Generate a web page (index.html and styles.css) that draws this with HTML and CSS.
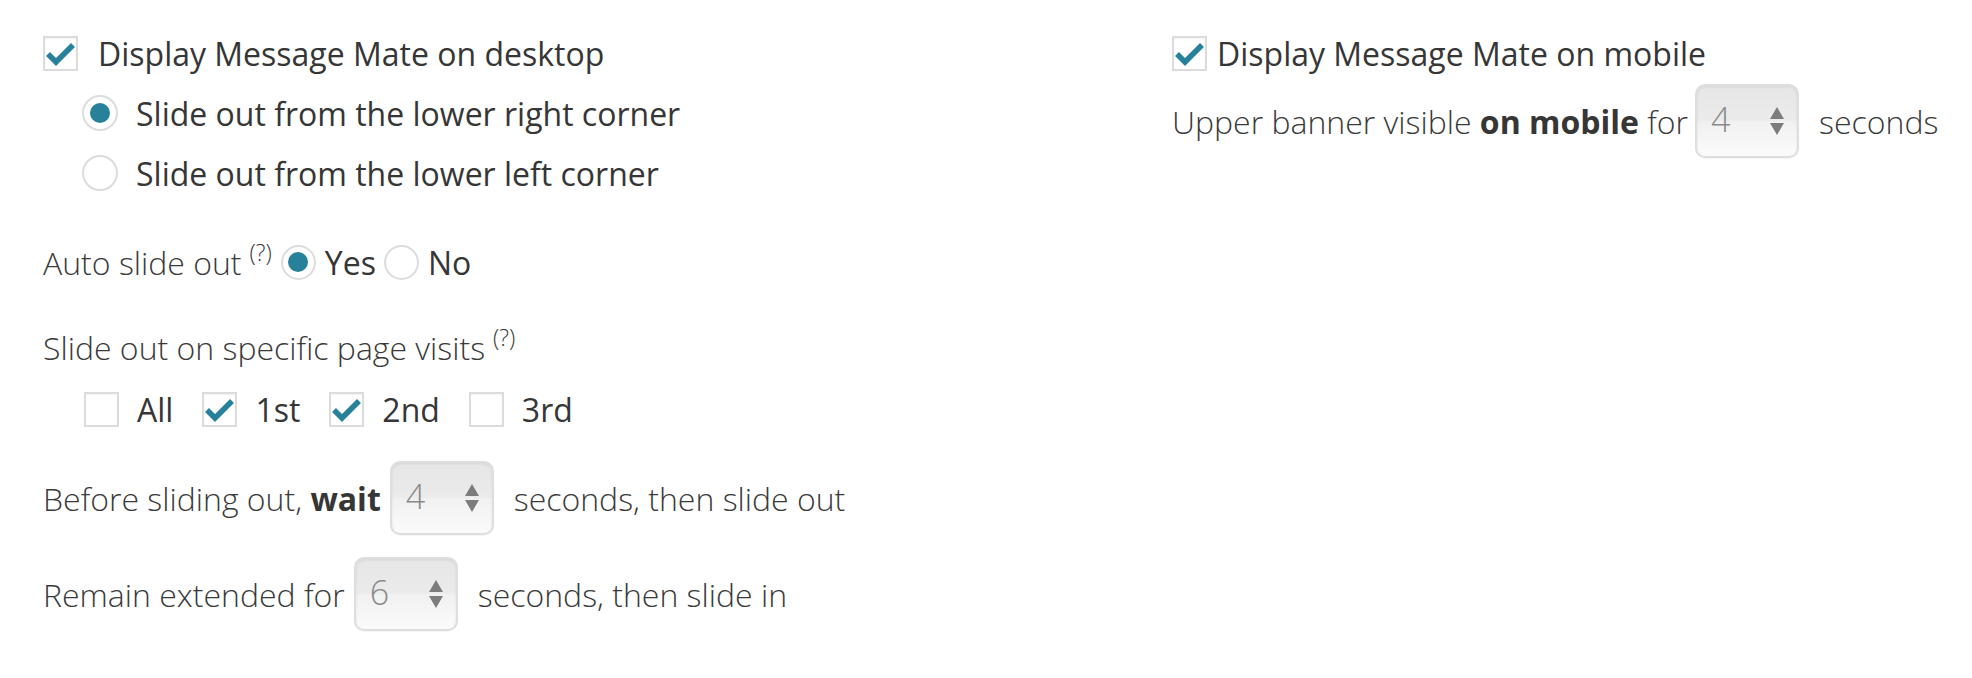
FILE: index.html
```html
<!DOCTYPE html>
<html lang="en">
<head>
<meta charset="utf-8">
<title>Message Mate settings</title>
<link rel="stylesheet" href="styles.css">
</head>
<body>
<div class="page">
  <div class="col col-left">
    <label class="row row-main">
      <span class="cb"><svg viewBox="0 0 31 31"><path d="M3 16 L11 24 L28 7"/></svg></span>
      <span class="lbl">Display Message Mate on desktop</span>
    </label>
    <div class="sub">
      <label class="row row-radio">
        <span class="radio on"></span>
        <span class="lbl">Slide out from the lower right corner</span>
      </label>
      <label class="row row-radio">
        <span class="radio"></span>
        <span class="lbl">Slide out from the lower left corner</span>
      </label>
    </div>
    <div class="row row-auto">
      <span class="desc">Auto slide out</span>
      <sup class="help">(?)</sup>
      <span class="radio on inline-radio"></span>
      <span class="lbl opt">Yes</span>
      <span class="radio inline-radio"></span>
      <span class="lbl opt">No</span>
    </div>
    <div class="row row-visits">
      <span class="desc">Slide out on specific page visits</span>
      <sup class="help">(?)</sup>
    </div>
    <div class="row row-checks">
      <label class="chk-item"><span class="cb"></span><span class="lbl">All</span></label>
      <label class="chk-item"><span class="cb"><svg viewBox="0 0 31 31"><path d="M3 16 L11 24 L28 7"/></svg></span><span class="lbl">1st</span></label>
      <label class="chk-item"><span class="cb"><svg viewBox="0 0 31 31"><path d="M3 16 L11 24 L28 7"/></svg></span><span class="lbl">2nd</span></label>
      <label class="chk-item"><span class="cb"></span><span class="lbl">3rd</span></label>
    </div>
    <div class="row row-input row-wait">
      <span class="desc">Before sliding out, <b>wait</b></span>
      <span class="num"><span class="num-val">4</span><svg class="spin" viewBox="0 0 14 28"><path d="M7 0 L14 12 L0 12 Z M0 16 L14 16 L7 28 Z"/></svg></span>
      <span class="desc">seconds, then slide out</span>
    </div>
    <div class="row row-input row-remain">
      <span class="desc">Remain extended for</span>
      <span class="num"><span class="num-val">6</span><svg class="spin" viewBox="0 0 14 28"><path d="M7 0 L14 12 L0 12 Z M0 16 L14 16 L7 28 Z"/></svg></span>
      <span class="desc">seconds, then slide in</span>
    </div>
  </div>
  <div class="col col-right">
    <label class="row row-main row-main-right">
      <span class="cb"><svg viewBox="0 0 31 31"><path d="M3 16 L11 24 L28 7"/></svg></span>
      <span class="lbl">Display Message Mate on mobile</span>
    </label>
    <div class="row row-input row-banner">
      <span class="desc">Upper banner visible <b>on mobile</b> for</span>
      <span class="num"><span class="num-val">4</span><svg class="spin" viewBox="0 0 14 28"><path d="M7 0 L14 12 L0 12 Z M0 16 L14 16 L7 28 Z"/></svg></span>
      <span class="desc">seconds</span>
    </div>
  </div>
</div>
</body>
</html>
```

FILE: styles.css
```css
html, body {
  margin: 0;
  background: #ffffff;
}

body {
  font-family: "Open Sans", "Liberation Sans", sans-serif;
  font-size: 32px;
  color: #444444;
}

.page {
  display: flex;
  padding: 23px 0 0 43px;
}

.col-left {
  width: 1129px;
  flex: none;
}

.col-right {
  flex: 1;
  padding-top: 2px;
}

.row {
  display: flex;
  align-items: center;
  height: 60px;
  white-space: nowrap;
}

.lbl {
  color: #363636;
}

.desc {
  font-weight: 300;
  color: #3a3a3a;
}

b {
  font-weight: 700;
  color: #363636;
}

/* checkbox */
.cb {
  box-sizing: border-box;
  width: 35px;
  height: 35px;
  flex: none;
  border: 2px solid #dcdcdc;
  background: #fff;
  box-shadow: inset 0 1px 2px rgba(0, 0, 0, 0.05);
  display: flex;
  align-items: center;
  justify-content: center;
}

.cb svg {
  width: 31px;
  height: 31px;
  display: block;
}

.cb svg path {
  fill: none;
  stroke: #27819a;
  stroke-width: 5.5;
}

.row-main .cb {
  margin-right: 20px;
}

.row-main-right {
  height: 56px;
}

.row-main-right .cb {
  margin-right: 10px;
}

/* radio */
.radio {
  box-sizing: border-box;
  width: 36px;
  height: 36px;
  flex: none;
  border-radius: 50%;
  border: 2px solid #dcdcdc;
  background: #fff;
  display: flex;
  align-items: center;
  justify-content: center;
}

.radio.on::after {
  content: "";
  width: 20px;
  height: 20px;
  border-radius: 50%;
  background: #27819a;
}

.sub {
  padding-left: 39px;
}

.row-radio .radio {
  margin-right: 18px;
}

.row-auto {
  margin-top: 29px;
}

.help {
  font-size: 23px;
  font-weight: 300;
  color: #3a3a3a;
  align-self: flex-start;
  margin-top: 9px;
  margin-left: 8px;
  line-height: 1;
}

.inline-radio {
  width: 35px;
  height: 35px;
  margin-left: 9px;
  margin-right: 9px;
}

.opt + .inline-radio {
  margin-left: 8px;
}

.row-visits {
  margin-top: 25px;
}

.row-visits .help {
  margin-left: 8px;
}

.row-checks {
  height: 64px;
  padding-left: 41px;
}

.chk-item {
  display: flex;
  align-items: center;
  margin-right: 29px;
}

.chk-item .cb {
  margin-right: 18px;
}

/* number inputs */
.row-input {
  height: 80px;
}

.row-wait {
  margin-top: 17px;
}

.row-remain {
  margin-top: 16px;
}

.num {
  box-sizing: border-box;
  width: 104px;
  height: 74px;
  flex: none;
  margin: 0 20px 0 9px;
  padding: 0 13px 0 14px;
  border: 2px solid #dedede;
  border-radius: 10px;
  background: linear-gradient(#e6e6e6 0%, #ebebeb 48%, #f1f1f1 52%, #fbfbfb 100%);
  box-shadow: inset 0 1px 3px rgba(0, 0, 0, 0.08), 0 1px 1px rgba(0, 0, 0, 0.04);
  display: flex;
  align-items: center;
  justify-content: space-between;
}

.row-banner .num {
  margin-left: 7px;
}

.num-val {
  font-size: 34px;
  font-weight: 300;
  color: #8a8a8a;
  margin-top: -4px;
}

.spin {
  width: 14px;
  height: 28px;
  display: block;
}

.spin path {
  fill: #7c7c7c;
}
```
